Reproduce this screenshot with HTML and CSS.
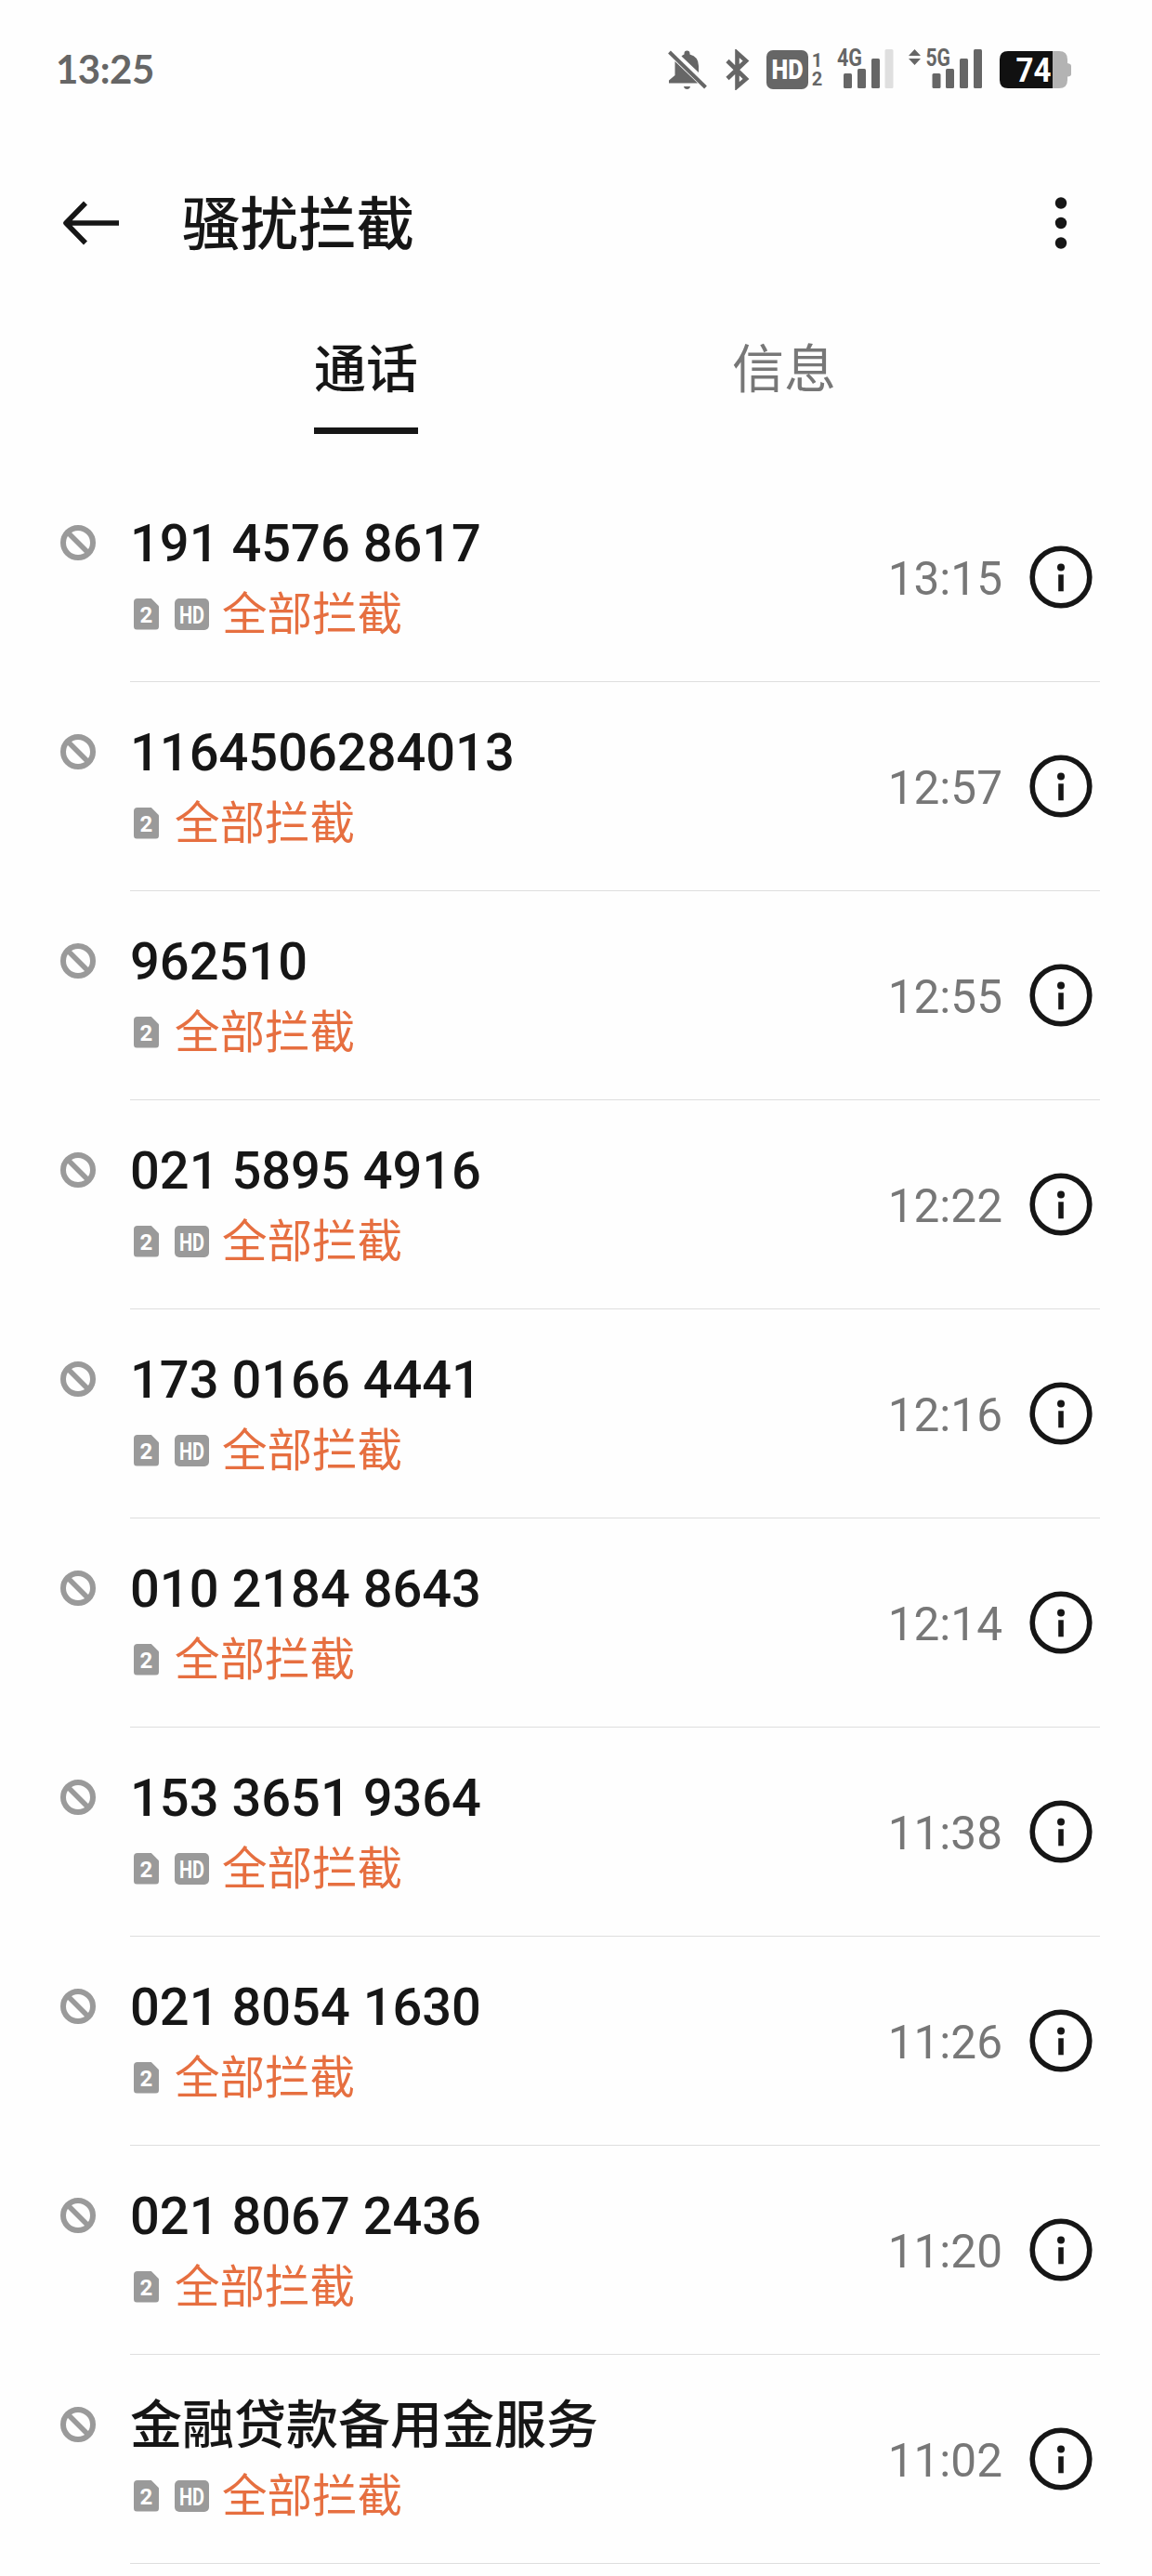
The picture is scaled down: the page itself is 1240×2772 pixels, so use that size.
FILE: index.html
```html
<!DOCTYPE html>
<html lang="zh-CN">
<head>
    <meta charset="UTF-8">
    <meta name="viewport" content="width=device-width, initial-scale=1.0">
    <title>骚扰拦截</title>
    <link rel="stylesheet" href="styles.css">
</head>
<body>

<!-- 图标定义 -->
<svg class="icon-defs" width="0" height="0">
    <symbol id="icon-block" viewBox="0 0 38 38">
        <circle cx="19" cy="19" r="16" fill="none" stroke="#9a9a9a" stroke-width="6"/>
        <path d="M8 8L30 30" stroke="#9a9a9a" stroke-width="5.5"/>
    </symbol>
    <symbol id="icon-info" viewBox="0 0 68 68">
        <circle cx="34" cy="34" r="30.8" fill="none" stroke="#161616" stroke-width="5.6"/>
        <circle cx="34" cy="23.5" r="4" fill="#161616"/>
        <path d="M34 31.3V49.3" stroke="#161616" stroke-width="5.6"/>
    </symbol>
</svg>

<!-- 状态栏 -->
<div class="status-bar">
    <span class="clock">13:25</span>
    <div class="status-icons">
        <svg class="icon-bell" width="42" height="44" viewBox="0 0 42 44">
            <path d="M7.500 13L32 36.500H1V33.500L7.500 28Z" fill="#666"/>
            <path d="M14.500 7.500Q16 6 17.500 5.500V4.500Q17.500 1.500 20.500 1.500T23.500 4.500V5.500Q33 8 33 18V25Z" fill="#666"/>
            <path d="M17 40H24Q23.500 43 20.500 43T17 40Z" fill="#666"/>
            <path d="M1.500 3L40.500 41" stroke="#666" stroke-width="4"/>
        </svg>
        <svg class="icon-bt" width="26" height="44" viewBox="0 0 26 44">
            <path d="M2 12.500L22 32L12.500 40V4L22 12.500L2 31.500" fill="none" stroke="#666" stroke-width="4.600"/>
        </svg>
        <svg class="icon-volte" width="62" height="44" viewBox="0 0 62 44">
            <rect x="0" y="1" width="45" height="42" rx="7" fill="#666"/>
            <text x="22.500" y="32" text-anchor="middle" font-size="29" font-weight="900" textLength="34" lengthAdjust="spacingAndGlyphs" fill="#fff">HD</text>
            <text x="54.500" y="19" text-anchor="middle" font-size="20" font-weight="700" fill="#666">1</text>
            <text x="54.500" y="39" text-anchor="middle" font-size="20" font-weight="700" fill="#666">2</text>
        </svg>
        <svg class="icon-signal" width="62" height="52" viewBox="0 -8 62 52">
            <text x="1" y="17.500" font-size="25" font-weight="700" textLength="27" lengthAdjust="spacingAndGlyphs" fill="#666">4G</text>
            <g fill="#666">
                <rect x="8" y="26" width="9" height="16" rx="1.500"/>
                <rect x="23" y="21" width="9" height="21" rx="1.500"/>
                <rect x="38" y="10" width="9" height="32" rx="1.500"/>
            </g>
            <rect x="52.500" y="0" width="9" height="42" rx="1.500" fill="#dfdfdf"/>
        </svg>
        <svg class="icon-signal icon-5g" width="79" height="52" viewBox="0 -8 79 52">
            <path d="M0 7L6.500 0L13 7ZM0 10H13L6.500 17Z" fill="#666"/>
            <text x="18.500" y="17.500" font-size="25" font-weight="700" textLength="26.500" lengthAdjust="spacingAndGlyphs" fill="#666">5G</text>
            <g fill="#666">
                <rect x="25.500" y="26" width="9" height="16" rx="1.500"/>
                <rect x="40" y="21" width="9" height="21" rx="1.500"/>
                <rect x="55" y="10" width="9" height="32" rx="1.500"/>
                <rect x="70" y="0" width="9" height="42" rx="1.500"/>
            </g>
        </svg>
        <svg class="icon-battery" width="78" height="44" viewBox="0 0 78 44">
            <path d="M50 2H64Q73 2 73 11V15Q77 15.500 77 18V27Q77 29 73 29.500V33Q73 42 64 42H50Z" fill="#b3b3b3"/>
            <path d="M57 2V42H9Q0 42 0 33V11Q0 2 9 2Z" fill="#111"/>
            <text x="36.500" y="34.500" text-anchor="middle" font-size="37" font-weight="700" textLength="38" lengthAdjust="spacingAndGlyphs" fill="#fff">74</text>
        </svg>
    </div>
</div>

<!-- 标题栏 -->
<div class="header">
    <svg class="icon-back" width="62" height="48" viewBox="0 0 62 48">
        <path d="M61 24H4M25 2.500L4 24L25 45.500" fill="none" stroke="#161616" stroke-width="5.600" stroke-linejoin="round"/>
    </svg>
    <h1 class="title">骚扰拦截</h1>
    <svg class="icon-more" width="14" height="56" viewBox="0 0 14 56">
        <circle cx="7" cy="6.500" r="6.200" fill="#161616"/>
        <circle cx="7" cy="28" r="6.200" fill="#161616"/>
        <circle cx="7" cy="49.500" r="6.200" fill="#161616"/>
    </svg>
</div>

<!-- 标签页 -->
<div class="tabs">
    <div class="tab active">通话</div>
    <div class="tab">信息</div>
</div>

<!-- 拦截记录 -->
<ul class="call-list">
    <li class="call">
        <svg class="icon-block"><use href="#icon-block"/></svg>
        <div class="call-body">
            <div class="call-text">
                <div class="number">191 4576 8617</div>
                <div class="reason"><span class="sim">2</span><svg class="hd"><text x="5" y="26.5" textLength="27" lengthAdjust="spacingAndGlyphs">HD</text></svg>全部拦截</div>
            </div>
            <span class="time">13:15</span>
            <svg class="icon-info"><use href="#icon-info"/></svg>
        </div>
    </li>
    <li class="call">
        <svg class="icon-block"><use href="#icon-block"/></svg>
        <div class="call-body">
            <div class="call-text">
                <div class="number">1164506284013</div>
                <div class="reason"><span class="sim">2</span>全部拦截</div>
            </div>
            <span class="time">12:57</span>
            <svg class="icon-info"><use href="#icon-info"/></svg>
        </div>
    </li>
    <li class="call">
        <svg class="icon-block"><use href="#icon-block"/></svg>
        <div class="call-body">
            <div class="call-text">
                <div class="number">962510</div>
                <div class="reason"><span class="sim">2</span>全部拦截</div>
            </div>
            <span class="time">12:55</span>
            <svg class="icon-info"><use href="#icon-info"/></svg>
        </div>
    </li>
    <li class="call">
        <svg class="icon-block"><use href="#icon-block"/></svg>
        <div class="call-body">
            <div class="call-text">
                <div class="number">021 5895 4916</div>
                <div class="reason"><span class="sim">2</span><svg class="hd"><text x="5" y="26.5" textLength="27" lengthAdjust="spacingAndGlyphs">HD</text></svg>全部拦截</div>
            </div>
            <span class="time">12:22</span>
            <svg class="icon-info"><use href="#icon-info"/></svg>
        </div>
    </li>
    <li class="call">
        <svg class="icon-block"><use href="#icon-block"/></svg>
        <div class="call-body">
            <div class="call-text">
                <div class="number">173 0166 4441</div>
                <div class="reason"><span class="sim">2</span><svg class="hd"><text x="5" y="26.5" textLength="27" lengthAdjust="spacingAndGlyphs">HD</text></svg>全部拦截</div>
            </div>
            <span class="time">12:16</span>
            <svg class="icon-info"><use href="#icon-info"/></svg>
        </div>
    </li>
    <li class="call">
        <svg class="icon-block"><use href="#icon-block"/></svg>
        <div class="call-body">
            <div class="call-text">
                <div class="number">010 2184 8643</div>
                <div class="reason"><span class="sim">2</span>全部拦截</div>
            </div>
            <span class="time">12:14</span>
            <svg class="icon-info"><use href="#icon-info"/></svg>
        </div>
    </li>
    <li class="call">
        <svg class="icon-block"><use href="#icon-block"/></svg>
        <div class="call-body">
            <div class="call-text">
                <div class="number">153 3651 9364</div>
                <div class="reason"><span class="sim">2</span><svg class="hd"><text x="5" y="26.5" textLength="27" lengthAdjust="spacingAndGlyphs">HD</text></svg>全部拦截</div>
            </div>
            <span class="time">11:38</span>
            <svg class="icon-info"><use href="#icon-info"/></svg>
        </div>
    </li>
    <li class="call">
        <svg class="icon-block"><use href="#icon-block"/></svg>
        <div class="call-body">
            <div class="call-text">
                <div class="number">021 8054 1630</div>
                <div class="reason"><span class="sim">2</span>全部拦截</div>
            </div>
            <span class="time">11:26</span>
            <svg class="icon-info"><use href="#icon-info"/></svg>
        </div>
    </li>
    <li class="call">
        <svg class="icon-block"><use href="#icon-block"/></svg>
        <div class="call-body">
            <div class="call-text">
                <div class="number">021 8067 2436</div>
                <div class="reason"><span class="sim">2</span>全部拦截</div>
            </div>
            <span class="time">11:20</span>
            <svg class="icon-info"><use href="#icon-info"/></svg>
        </div>
    </li>
    <li class="call">
        <svg class="icon-block"><use href="#icon-block"/></svg>
        <div class="call-body">
            <div class="call-text">
                <div class="number">金融贷款备用金服务</div>
                <div class="reason"><span class="sim">2</span><svg class="hd"><text x="5" y="26.5" textLength="27" lengthAdjust="spacingAndGlyphs">HD</text></svg>全部拦截</div>
            </div>
            <span class="time">11:02</span>
            <svg class="icon-info"><use href="#icon-info"/></svg>
        </div>
    </li>
</ul>

</body>
</html>
```
FILE: styles.css
```css
* {
    box-sizing: border-box;
}
body {
    margin: 0;
    width: 1240px;
    height: 2772px;
    overflow: hidden;
    background: #fefefe;
    color: #161616;
    font-family: Roboto, "Noto Sans CJK SC", sans-serif;
}
svg {
    display: block;
    flex: none;
}
.icon-defs {
    position: absolute;
}

/* 状态栏 */
.status-bar {
    display: flex;
    justify-content: space-between;
    height: 150px;
    padding: 45px 86px 0 60px;
}
.clock {
    height: 52px;
    padding-top: 8px;
    line-height: 42px;
    font-family: Lato, sans-serif;
    font-size: 42px;
    font-weight: 700;
    letter-spacing: -0.5px;
    color: #666;
}
.status-icons {
    display: flex;
    align-items: flex-end;
    height: 52px;
}
.icon-bt {
    margin-left: 20px;
}
.icon-volte {
    margin-left: 18px;
}
.icon-signal {
    margin-left: 13px;
}
.icon-5g {
    margin-left: 16px;
}
.icon-battery {
    margin-left: 19px;
}

/* 标题栏 */
.header {
    display: flex;
    align-items: center;
    height: 180px;
    padding: 0 91px 0 67px;
}
.title {
    flex: 1;
    margin: 0 0 0 67px;
    padding-top: 5px;
    font-size: 62.5px;
    font-weight: 500;
    line-height: 80px;
}

/* 标签页 */
.tabs {
    display: flex;
    justify-content: center;
    gap: 338px;
    height: 179px;
    padding: 28px 2px 0 0;
}
.tab {
    height: 109px;
    font-size: 56px;
    line-height: 80px;
    color: #777;
}
.tab.active {
    font-weight: 500;
    color: #161616;
    border-bottom: 7px solid #161616;
}

/* 列表 */
.call-list {
    margin: 0;
    padding: 0;
    list-style: none;
}
.call {
    display: flex;
    height: 225px;
    padding: 0 56px 0 65px;
}
.icon-block {
    width: 38px;
    height: 38px;
    margin: 56px 37px 0 0;
}
.call-body {
    flex: 1;
    display: flex;
    align-items: center;
    padding: 0 8px 0 0;
    border-bottom: 1px solid #dedede;
}
.call-text {
    flex: 1;
}
.number {
    height: 60px;
    font-size: 56px;
    font-weight: 500;
    line-height: 58px;
}
.reason {
    display: flex;
    align-items: center;
    height: 50px;
    margin-top: 21px;
    padding-left: 4px;
    font-size: 48.5px;
    line-height: 50px;
    color: #e66f40;
}
.sim,
.hd {
    height: 34px;
    margin-bottom: 2px;
    background: #9a9a9a;
    color: #fff;
    fill: #fff;
    font-size: 24px;
    font-weight: 700;
    line-height: 37px;
    text-align: center;
}
.sim {
    width: 27px;
    margin-right: 17px;
    border-radius: 4px;
    clip-path: polygon(0 0, 68% 0, 100% 26%, 100% 100%, 0 100%);
}
.hd {
    width: 37px;
    margin-right: 14px;
    border-radius: 5px;
    font-size: 26px;
}
.time {
    padding-top: 3px;
    font-size: 49.5px;
    color: #777;
}
.icon-info {
    width: 68px;
    height: 68px;
    margin-left: 29px;
}
```
